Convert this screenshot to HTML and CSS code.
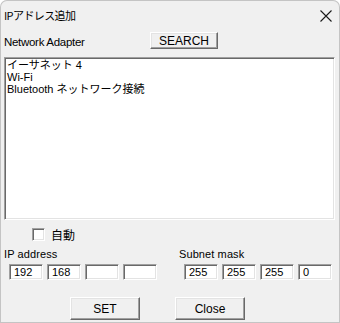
FILE: index.html
```html
<!DOCTYPE html>
<html lang="ja">
<head>
<meta charset="utf-8">
<link rel="stylesheet" href="styles.css">
</head>
<body>
<div class="win">
  <div class="titlebar">
    <span class="title">IPアドレス追加</span>
    <svg class="close-x" width="12" height="12" viewBox="0 0 12 12"><path d="M0.5 0.5 L11.5 11.5 M11.5 0.5 L0.5 11.5" stroke="#1a1a1a" stroke-width="1.1" fill="none"/></svg>
  </div>
  <div class="adapter-row">
    <span class="adapter-label">Network Adapter</span>
    <button class="btn search">SEARCH</button>
  </div>
  <div class="list">
    <div class="item">イーサネット 4</div>
    <div class="item">Wi-Fi</div>
    <div class="item">Bluetooth ネットワーク接続</div>
  </div>
  <div class="auto-row">
    <span class="chk"></span>
    <span class="auto-label">自動</span>
  </div>
  <div class="fields">
    <div class="group ip">
      <div class="lbl">IP address</div>
      <div class="octets">
        <div class="oct">192</div>
        <div class="oct">168</div>
        <div class="oct"></div>
        <div class="oct"></div>
      </div>
    </div>
    <div class="group mask">
      <div class="lbl">Subnet mask</div>
      <div class="octets">
        <div class="oct">255</div>
        <div class="oct">255</div>
        <div class="oct">255</div>
        <div class="oct">0</div>
      </div>
    </div>
  </div>
  <div class="buttons">
    <button class="btn action">SET</button>
    <button class="btn action">Close</button>
  </div>
</div>
</body>
</html>
```
FILE: styles.css
```css
* { box-sizing: border-box; }
html, body { margin: 0; padding: 0; background: #ffffff; }
body {
  font-family: "Liberation Sans", "Noto Sans CJK JP", sans-serif;
  font-size: 12px;
  color: #000;
}
.win {
  width: 340px;
  height: 323px;
  background: #f0f0f0;
  border-radius: 7px 7px 0 0;
  box-shadow: inset 0 0 0 1px #c4c4c4;
  overflow: hidden;
}
.titlebar {
  height: 31px;
  display: flex;
  align-items: center;
  justify-content: space-between;
  padding: 0 8px 1px 4px;
}
.title {
  font-family: "Noto Sans CJK JP", sans-serif;
  font-size: 11px;
  letter-spacing: -0.6px;
  line-height: 14px;
}
.close-x { display: block; margin-top: 1px; }
.adapter-row {
  height: 26px;
  display: flex;
  align-items: flex-start;
  padding: 1px 0 0 4px;
}
.adapter-label {
  width: 146px;
  line-height: 17px;
  padding-top: 2px;
  font-size: 11.5px;
  letter-spacing: -0.3px;
}
.btn {
  font-family: "Liberation Sans", sans-serif;
  font-size: 12px;
  color: #000;
  background: #f0f0f0;
  border: 1px solid;
  border-color: #ffffff #696969 #696969 #ffffff;
  box-shadow: inset -1px -1px #a0a0a0, inset 1px 1px #e3e3e3;
  padding: 0;
  margin: 0;
}
.search {
  width: 68px;
  height: 17px;
  line-height: 14px;
}
.list {
  margin-left: 4px;
  width: 331px;
  height: 163px;
  background: #fff;
  border: 1px solid;
  border-color: #a0a0a0 #ffffff #ffffff #a0a0a0;
  box-shadow: inset 1px 1px #696969, inset -1px -1px #e3e3e3;
  padding: 1px 2px;
}
.item {
  line-height: 12px;
  height: 12px;
  font-size: 11px;
  white-space: nowrap;
}
.auto-row {
  display: flex;
  align-items: center;
  height: 13px;
  margin-top: 8px;
  padding-left: 32px;
}
.chk {
  width: 13px;
  height: 13px;
  background: #fff;
  border: 1px solid;
  border-color: #a0a0a0 #ffffff #ffffff #a0a0a0;
  box-shadow: inset 1px 1px #696969, inset -1px -1px #e3e3e3;
}
.auto-label {
  margin-left: 6px;
  font-family: "Noto Sans CJK JP", sans-serif;
  font-size: 12px;
  line-height: 13px;
}
.fields {
  display: flex;
  margin-top: 6px;
  padding-left: 4px;
}
.group.ip { width: 175px; }
.lbl {
  line-height: 14px;
  height: 14px;
  font-size: 11px;
  letter-spacing: 0.1px;
}
.octets {
  display: flex;
  gap: 4px;
  margin-top: 3px;
  padding-left: 5px;
}
.oct {
  width: 34px;
  height: 16px;
  background: #fff;
  border: 1px solid;
  border-color: #a0a0a0 #ffffff #ffffff #a0a0a0;
  box-shadow: inset 1px 1px #696969, inset -1px -1px #e3e3e3;
  padding-left: 4px;
  line-height: 14px;
  font-size: 11px;
}
.buttons {
  display: flex;
  gap: 35px;
  margin-top: 17px;
  padding-left: 70px;
}
.action {
  width: 70px;
  height: 23px;
}
```
